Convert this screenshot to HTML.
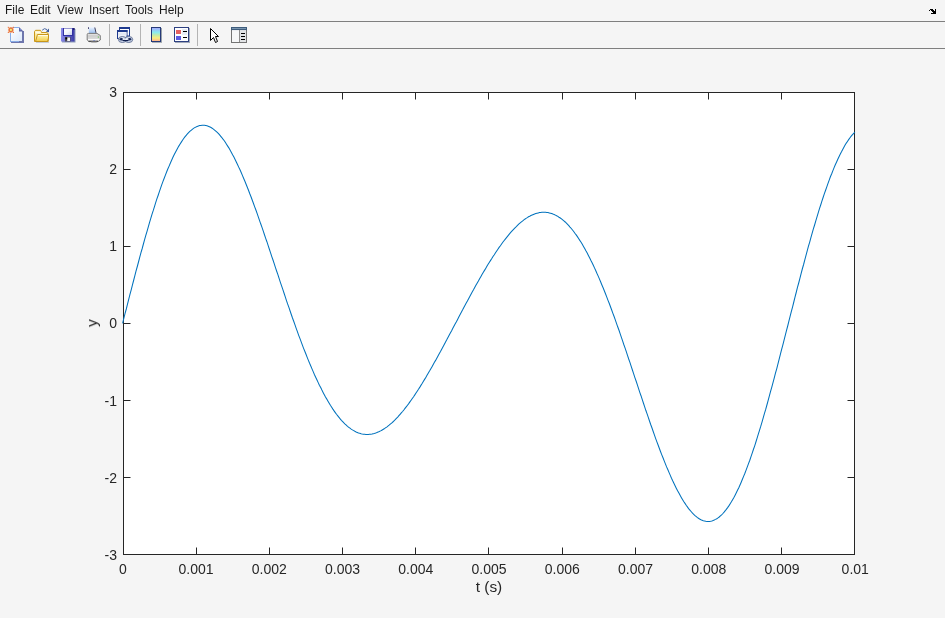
<!DOCTYPE html>
<html><head><meta charset="utf-8"><style>
html,body{margin:0;padding:0;}
body{width:945px;height:618px;background:#f5f5f5;position:relative;overflow:hidden;font-family:"Liberation Sans",sans-serif;}
.menu{position:absolute;top:0;left:0;width:945px;height:21px;font-size:12px;color:#1a1a1a;}
.menu span{position:absolute;top:3px;will-change:transform;}
.hl{position:absolute;left:0;width:945px;height:1px;background:#7f7f7f;}
.sep{position:absolute;top:24px;width:1px;height:22px;background:#b4b4b4;}
svg{position:absolute;left:0;top:0;}
.g{will-change:transform;}
</style></head><body>
<div class="menu"><span style="left:5px">File</span><span style="left:30px">Edit</span><span style="left:57px">View</span><span style="left:89px">Insert</span><span style="left:125px">Tools</span><span style="left:159px">Help</span></div>
<div class="hl" style="top:21px"></div>
<div class="hl" style="top:48px"></div>
<div class="sep" style="left:109px"></div>
<div class="sep" style="left:140px"></div>
<div class="sep" style="left:197px"></div>
<svg width="945" height="618" viewBox="0 0 945 618">
<defs>
<linearGradient id="gpage" x1="0" y1="0" x2="1" y2="1"><stop offset="0" stop-color="#ffffff"/><stop offset="1" stop-color="#dce9fb"/></linearGradient>
<linearGradient id="gfold" x1="0" y1="0" x2="0" y2="1"><stop offset="0" stop-color="#fff8b8"/><stop offset="1" stop-color="#f2cc48"/></linearGradient>
<linearGradient id="gcbar" x1="0" y1="0" x2="0" y2="1"><stop offset="0" stop-color="#a8a4ff"/><stop offset="0.35" stop-color="#88ecf0"/><stop offset="0.55" stop-color="#c4eaa8"/><stop offset="0.75" stop-color="#f8f080"/><stop offset="1" stop-color="#ffa890"/></linearGradient>
<linearGradient id="gsave" x1="0" y1="0" x2="1" y2="0"><stop offset="0" stop-color="#8a8ae8"/><stop offset="1" stop-color="#3c3ca8"/></linearGradient>
<linearGradient id="gpaper" x1="0" y1="0" x2="0" y2="1"><stop offset="0" stop-color="#eaf2ff"/><stop offset="1" stop-color="#9cc0f0"/></linearGradient>
<linearGradient id="glabel" x1="0" y1="0" x2="1" y2="1"><stop offset="0" stop-color="#ffffff"/><stop offset="0.5" stop-color="#f4f6fc"/><stop offset="1" stop-color="#c8d0ea"/></linearGradient>
</defs>
<!-- new -->
<g transform="translate(6,25)">
<path d="M5 6 H18 V18 H5 Z" fill="#6e76ac"/>
<path d="M4 2 H13 V17 H4 Z" fill="#88ace6"/>
<path d="M5 3 H13 V6 H16 V16 H5 Z" fill="url(#gpage)"/>
<path d="M13 2 L17.5 6.5 H13 Z" fill="#5e66a8"/>
<rect x="14" y="4" width="1" height="1.2" fill="#7890d8"/>
<circle cx="4.9" cy="4.9" r="3" fill="#f4b894"/>
<circle cx="4.9" cy="4.9" r="2.3" fill="#e8703e"/>
<circle cx="4.9" cy="4.9" r="1.1" fill="#eef078"/>
<rect x="1.8" y="1.8" width="1.1" height="1.1" fill="#e8703a"/><rect x="6.9" y="1.8" width="1.1" height="1.1" fill="#e8703a"/>
<rect x="1.8" y="6.9" width="1.1" height="1.1" fill="#e8703a"/><rect x="6.9" y="6.9" width="1.1" height="1.1" fill="#e8703a"/>
</g>
<!-- open -->
<g transform="translate(32,25)">
<rect x="4" y="16.8" width="13" height="1.2" fill="#c4ccd8"/>
<path d="M2.5 16.5 V6.5 L3.5 5.3 H8.5 L9.5 7.5 H14.8 L16.2 8.5 V16.5 Z" fill="#fbe89a" stroke="#c8961a" stroke-width="1"/>
<rect x="3.3" y="6.3" width="5.4" height="2.2" fill="#fffbe4"/>
<rect x="9.5" y="8.2" width="5" height="0.8" fill="#fff6d0"/>
<path d="M5.5 9.5 H16.5 V13 L15.5 16.5 H3.5 Z" fill="url(#gfold)" stroke="#c8961a" stroke-width="1" stroke-linejoin="round"/>
<path d="M6 10 H15.8 V10.9 H5.8 Z" fill="#fffbe6"/>
<path d="M10.2 5.2 Q12.5 2.4 15 4.6" fill="none" stroke="#4a66a0" stroke-width="1"/>
<path d="M13.8 6.6 L17 3.6 V7.2 Z" fill="#3e5c9c"/>
</g>
<!-- save -->
<g transform="translate(58,25)">
<rect x="4" y="4" width="13.5" height="13.5" fill="#8c9ab8"/>
<rect x="3" y="3" width="13.5" height="13.5" fill="url(#gsave)"/>
<rect x="15" y="3" width="1.5" height="2" fill="#22226a"/>
<rect x="5" y="3" width="10" height="8" fill="#3232a2"/>
<rect x="6" y="3.5" width="8" height="6.5" fill="url(#glabel)"/>
<rect x="7" y="12" width="5.5" height="4.5" fill="#4a4a52"/>
<rect x="9.2" y="12.5" width="2.8" height="3.6" fill="#f4f4f4"/>
<rect x="7.4" y="12.5" width="1.8" height="1.8" fill="#000"/>
</g>
<!-- print -->
<g transform="translate(84,25)">
<path d="M4.5 2.3 H10.8 L12.2 8.2 H5 Z" fill="url(#gpaper)"/>
<path d="M4.5 2.2 V4" stroke="#50507a" stroke-width="1"/>
<path d="M10.8 2.5 L12 7.8" stroke="#3c3c5a" stroke-width="1"/>
<path d="M3.2 9.5 Q3.2 8.4 4.5 8.4 H13 L16.3 10.5 V15 L14 16.6 H5 L3.2 15 Z" fill="#ececec" stroke="#5c5c5c" stroke-width="0.8"/>
<path d="M4 10.2 H15.5 M4 11.8 H15.5 M4 13.2 H15.5" stroke="#a8a8a8" stroke-width="0.6"/>
<path d="M4 13.8 H15 V15.2 H4 Z" fill="#fbfbfb"/>
<path d="M4.5 16.2 H14" stroke="#3a3a3a" stroke-width="1"/>
<rect x="7.2" y="16.6" width="5.5" height="1" fill="#9a9a9a"/>
<rect x="13.8" y="11.5" width="1" height="1.2" fill="#58c048"/>
<rect x="9.4" y="15" width="1.4" height="0.9" fill="#7080c8"/>
</g>
<!-- link -->
<g transform="translate(114,25)">
<rect x="5.5" y="2.5" width="10" height="8.5" fill="#ffffff" stroke="#1e3a8e" stroke-width="1"/>
<rect x="5" y="2" width="11" height="2" fill="#1e3a8e"/>
<rect x="3.5" y="5.5" width="9.5" height="8" fill="#f6f8fc" stroke="#1e3a8e" stroke-width="1"/>
<rect x="3" y="5" width="10.5" height="2" fill="#1e3a8e"/>
<rect x="4" y="7.5" width="8.5" height="3" fill="#e2e8f4"/>
<ellipse cx="8.4" cy="14.5" rx="4" ry="3" fill="#d4def0" stroke="#56648a" stroke-width="0.9"/>
<ellipse cx="14.7" cy="14.5" rx="4" ry="3" fill="#d4def0" stroke="#56648a" stroke-width="0.9"/>
<ellipse cx="7.4" cy="14.3" rx="1.8" ry="1.3" fill="#1a2a5a"/>
<ellipse cx="15.5" cy="14.3" rx="1.8" ry="1.3" fill="#1a2a5a"/>
<rect x="8.5" y="13.6" width="6" height="1.1" fill="#f8faff"/>
<rect x="8.5" y="15" width="6" height="1.1" fill="#0e1e4e"/>
</g>
<!-- colorbar -->
<g transform="translate(146,25)">
<rect x="6" y="3" width="10" height="14.8" fill="#98a0a8"/>
<rect x="5.5" y="2.5" width="9" height="14" fill="url(#gcbar)" stroke="#263a78" stroke-width="1"/>
</g>
<!-- legend -->
<g transform="translate(172,25)">
<rect x="3" y="3" width="15" height="15" fill="#a0a8b8"/>
<rect x="2.5" y="2.5" width="14" height="14" fill="#fdfdff" stroke="#2c3f80" stroke-width="1"/>
<rect x="10" y="4" width="5" height="6" fill="#e6ecf6"/>
<rect x="4" y="5" width="5" height="4" fill="#e46060"/>
<rect x="4" y="11" width="5" height="4" fill="#5a5ae2"/>
<path d="M11 6.5 H15 M11 12.5 H15" stroke="#000" stroke-width="1"/>
</g>
<!-- arrow -->
<g transform="translate(204,25)">
<path d="M6.5 3.5 V15.5 L9.5 12.5 L11.5 17.5 L13.5 16.5 L11.5 11.5 H14.5 Z" fill="#fff" stroke="#000" stroke-width="1" stroke-linejoin="round"/>
</g>
<!-- property -->
<g transform="translate(229,25)">
<rect x="2.5" y="2.5" width="15" height="15" fill="#e6e8ea" stroke="#747474" stroke-width="1"/>
<rect x="2" y="2" width="16" height="3.2" fill="#3e5c7c"/>
<rect x="3" y="3.2" width="14" height="0.6" fill="#a4bcd4"/>
<rect x="3" y="5.2" width="7" height="11.8" fill="#f6f7f8"/>
<rect x="11" y="5.2" width="6" height="11.8" fill="#e2e4e6"/>
<path d="M10.5 5 V17" stroke="#8c8c8c" stroke-width="1"/>
<path d="M12 8.5 H16 M12 11.5 H16 M12 14.5 H16" stroke="#000" stroke-width="1"/>
</g>
<!-- dock -->
<path d="M930 9h3v1h-3z M935 9h1v5h-1z M929 10h1v1h-1z M931 10h3v1h-3z M932 11h3v1h-3z M933 12h2v1h-2z M931 13h4v1h-4z" fill="#000"/>

<rect x="123.5" y="92.5" width="731" height="462" fill="#fff" stroke="#262626" stroke-width="1"/>
<path d="M123.5 93 V99.5 M123.5 554 V547.5 M196.5 93 V99.5 M196.5 554 V547.5 M269.5 93 V99.5 M269.5 554 V547.5 M342.5 93 V99.5 M342.5 554 V547.5 M415.5 93 V99.5 M415.5 554 V547.5 M488.5 93 V99.5 M488.5 554 V547.5 M562.5 93 V99.5 M562.5 554 V547.5 M635.5 93 V99.5 M635.5 554 V547.5 M708.5 93 V99.5 M708.5 554 V547.5 M781.5 93 V99.5 M781.5 554 V547.5 M854.5 93 V99.5 M854.5 554 V547.5 M124 92.5 H130.5 M854 92.5 H847.5 M124 169.5 H130.5 M854 169.5 H847.5 M124 246.5 H130.5 M854 246.5 H847.5 M124 323.5 H130.5 M854 323.5 H847.5 M124 400.5 H130.5 M854 400.5 H847.5 M124 477.5 H130.5 M854 477.5 H847.5 M124 554.5 H130.5 M854 554.5 H847.5" stroke="#262626" stroke-width="1" fill="none"/>
<path d="M122.6 323.4 L123.8 318.5 L125.0 313.7 L126.3 309.0 L127.5 304.2 L128.7 299.4 L129.9 294.6 L131.2 289.9 L132.4 285.2 L133.6 280.5 L134.8 275.8 L136.0 271.2 L137.3 266.5 L138.5 262.0 L139.7 257.4 L140.9 252.9 L142.2 248.5 L143.4 244.0 L144.6 239.7 L145.8 235.4 L147.1 231.1 L148.3 226.9 L149.5 222.7 L150.7 218.7 L151.9 214.6 L153.2 210.7 L154.4 206.8 L155.6 202.9 L156.8 199.2 L158.1 195.5 L159.3 191.9 L160.5 188.4 L161.7 184.9 L162.9 181.6 L164.2 178.3 L165.4 175.1 L166.6 172.0 L167.8 169.0 L169.1 166.1 L170.3 163.2 L171.5 160.5 L172.7 157.8 L173.9 155.3 L175.2 152.8 L176.4 150.5 L177.6 148.2 L178.8 146.1 L180.1 144.0 L181.3 142.1 L182.5 140.2 L183.7 138.5 L184.9 136.9 L186.2 135.3 L187.4 133.9 L188.6 132.6 L189.8 131.4 L191.1 130.3 L192.3 129.3 L193.5 128.4 L194.7 127.6 L196.0 127.0 L197.2 126.4 L198.4 126.0 L199.6 125.6 L200.8 125.4 L202.1 125.3 L203.3 125.2 L204.5 125.3 L205.7 125.5 L207.0 125.8 L208.2 126.2 L209.4 126.7 L210.6 127.3 L211.8 128.0 L213.1 128.9 L214.3 129.8 L215.5 130.8 L216.7 131.9 L218.0 133.1 L219.2 134.4 L220.4 135.8 L221.6 137.3 L222.8 138.9 L224.1 140.5 L225.3 142.3 L226.5 144.2 L227.7 146.1 L229.0 148.1 L230.2 150.2 L231.4 152.4 L232.6 154.7 L233.9 157.0 L235.1 159.4 L236.3 161.9 L237.5 164.5 L238.7 167.1 L240.0 169.8 L241.2 172.5 L242.4 175.4 L243.6 178.2 L244.9 181.2 L246.1 184.2 L247.3 187.2 L248.5 190.3 L249.7 193.5 L251.0 196.7 L252.2 200.0 L253.4 203.2 L254.6 206.6 L255.9 210.0 L257.1 213.4 L258.3 216.8 L259.5 220.3 L260.7 223.8 L262.0 227.3 L263.2 230.9 L264.4 234.5 L265.6 238.1 L266.9 241.7 L268.1 245.3 L269.3 249.0 L270.5 252.6 L271.7 256.3 L273.0 260.0 L274.2 263.7 L275.4 267.4 L276.6 271.0 L277.9 274.7 L279.1 278.4 L280.3 282.1 L281.5 285.7 L282.8 289.4 L284.0 293.0 L285.2 296.7 L286.4 300.3 L287.6 303.9 L288.9 307.4 L290.1 311.0 L291.3 314.5 L292.5 318.0 L293.8 321.5 L295.0 324.9 L296.2 328.3 L297.4 331.7 L298.6 335.1 L299.9 338.4 L301.1 341.6 L302.3 344.9 L303.5 348.1 L304.8 351.2 L306.0 354.3 L307.2 357.4 L308.4 360.4 L309.6 363.3 L310.9 366.2 L312.1 369.1 L313.3 371.9 L314.5 374.7 L315.8 377.4 L317.0 380.0 L318.2 382.6 L319.4 385.2 L320.7 387.6 L321.9 390.1 L323.1 392.4 L324.3 394.7 L325.5 397.0 L326.8 399.1 L328.0 401.2 L329.2 403.3 L330.4 405.3 L331.7 407.2 L332.9 409.1 L334.1 410.9 L335.3 412.6 L336.5 414.3 L337.8 415.9 L339.0 417.4 L340.2 418.9 L341.4 420.3 L342.7 421.6 L343.9 422.9 L345.1 424.1 L346.3 425.2 L347.5 426.3 L348.8 427.3 L350.0 428.2 L351.2 429.1 L352.4 429.9 L353.7 430.6 L354.9 431.3 L356.1 431.9 L357.3 432.4 L358.5 432.9 L359.8 433.3 L361.0 433.7 L362.2 434.0 L363.4 434.2 L364.7 434.3 L365.9 434.4 L367.1 434.5 L368.3 434.4 L369.6 434.3 L370.8 434.2 L372.0 434.0 L373.2 433.7 L374.4 433.4 L375.7 433.0 L376.9 432.6 L378.1 432.1 L379.3 431.5 L380.6 430.9 L381.8 430.2 L383.0 429.5 L384.2 428.8 L385.4 427.9 L386.7 427.1 L387.9 426.1 L389.1 425.2 L390.3 424.1 L391.6 423.1 L392.8 422.0 L394.0 420.8 L395.2 419.6 L396.4 418.3 L397.7 417.1 L398.9 415.7 L400.1 414.3 L401.3 412.9 L402.6 411.5 L403.8 410.0 L405.0 408.4 L406.2 406.9 L407.5 405.2 L408.7 403.6 L409.9 401.9 L411.1 400.2 L412.3 398.5 L413.6 396.7 L414.8 394.9 L416.0 393.0 L417.2 391.2 L418.5 389.3 L419.7 387.4 L420.9 385.4 L422.1 383.5 L423.3 381.5 L424.6 379.4 L425.8 377.4 L427.0 375.3 L428.2 373.2 L429.5 371.1 L430.7 369.0 L431.9 366.9 L433.1 364.7 L434.3 362.5 L435.6 360.4 L436.8 358.2 L438.0 355.9 L439.2 353.7 L440.5 351.5 L441.7 349.2 L442.9 347.0 L444.1 344.7 L445.3 342.4 L446.6 340.1 L447.8 337.8 L449.0 335.5 L450.2 333.2 L451.5 330.9 L452.7 328.6 L453.9 326.3 L455.1 324.0 L456.4 321.7 L457.6 319.4 L458.8 317.0 L460.0 314.7 L461.2 312.4 L462.5 310.1 L463.7 307.8 L464.9 305.5 L466.1 303.3 L467.4 301.0 L468.6 298.7 L469.8 296.5 L471.0 294.2 L472.2 292.0 L473.5 289.8 L474.7 287.5 L475.9 285.3 L477.1 283.2 L478.4 281.0 L479.6 278.8 L480.8 276.7 L482.0 274.6 L483.2 272.5 L484.5 270.4 L485.7 268.4 L486.9 266.3 L488.1 264.3 L489.4 262.3 L490.6 260.4 L491.8 258.5 L493.0 256.5 L494.3 254.7 L495.5 252.8 L496.7 251.0 L497.9 249.2 L499.1 247.4 L500.4 245.7 L501.6 244.0 L502.8 242.3 L504.0 240.7 L505.3 239.1 L506.5 237.6 L507.7 236.1 L508.9 234.6 L510.1 233.1 L511.4 231.7 L512.6 230.4 L513.8 229.1 L515.0 227.8 L516.3 226.6 L517.5 225.4 L518.7 224.2 L519.9 223.1 L521.1 222.1 L522.4 221.1 L523.6 220.1 L524.8 219.2 L526.0 218.4 L527.3 217.6 L528.5 216.8 L529.7 216.2 L530.9 215.5 L532.2 214.9 L533.4 214.4 L534.6 213.9 L535.8 213.5 L537.0 213.2 L538.3 212.9 L539.5 212.6 L540.7 212.4 L541.9 212.3 L543.2 212.2 L544.4 212.2 L545.6 212.3 L546.8 212.4 L548.0 212.6 L549.3 212.9 L550.5 213.2 L551.7 213.5 L552.9 214.0 L554.2 214.5 L555.4 215.1 L556.6 215.7 L557.8 216.4 L559.0 217.2 L560.3 218.0 L561.5 218.9 L562.7 219.9 L563.9 220.9 L565.2 222.0 L566.4 223.2 L567.6 224.4 L568.8 225.7 L570.0 227.1 L571.3 228.5 L572.5 230.0 L573.7 231.5 L574.9 233.2 L576.2 234.9 L577.4 236.6 L578.6 238.5 L579.8 240.4 L581.1 242.3 L582.3 244.3 L583.5 246.4 L584.7 248.6 L585.9 250.8 L587.2 253.0 L588.4 255.4 L589.6 257.7 L590.8 260.2 L592.1 262.7 L593.3 265.3 L594.5 267.9 L595.7 270.5 L596.9 273.3 L598.2 276.1 L599.4 278.9 L600.6 281.8 L601.8 284.7 L603.1 287.7 L604.3 290.7 L605.5 293.8 L606.7 296.9 L607.9 300.1 L609.2 303.3 L610.4 306.5 L611.6 309.8 L612.8 313.1 L614.1 316.5 L615.3 319.9 L616.5 323.3 L617.7 326.8 L619.0 330.3 L620.2 333.8 L621.4 337.3 L622.6 340.9 L623.8 344.5 L625.1 348.1 L626.3 351.7 L627.5 355.3 L628.7 359.0 L630.0 362.6 L631.2 366.3 L632.4 370.0 L633.6 373.6 L634.8 377.3 L636.1 381.0 L637.3 384.7 L638.5 388.4 L639.7 392.1 L641.0 395.7 L642.2 399.4 L643.4 403.0 L644.6 406.7 L645.8 410.3 L647.1 413.9 L648.3 417.4 L649.5 421.0 L650.7 424.5 L652.0 428.0 L653.2 431.5 L654.4 434.9 L655.6 438.3 L656.8 441.6 L658.1 445.0 L659.3 448.2 L660.5 451.5 L661.7 454.6 L663.0 457.8 L664.2 460.9 L665.4 463.9 L666.6 466.9 L667.9 469.8 L669.1 472.6 L670.3 475.4 L671.5 478.2 L672.7 480.8 L674.0 483.4 L675.2 485.9 L676.4 488.4 L677.6 490.8 L678.9 493.1 L680.1 495.3 L681.3 497.4 L682.5 499.5 L683.7 501.5 L685.0 503.4 L686.2 505.2 L687.4 506.9 L688.6 508.6 L689.9 510.1 L691.1 511.5 L692.3 512.9 L693.5 514.2 L694.7 515.3 L696.0 516.4 L697.2 517.4 L698.4 518.2 L699.6 519.0 L700.9 519.7 L702.1 520.2 L703.3 520.7 L704.5 521.0 L705.8 521.3 L707.0 521.4 L708.2 521.5 L709.4 521.4 L710.6 521.2 L711.9 520.9 L713.1 520.5 L714.3 520.0 L715.5 519.4 L716.8 518.7 L718.0 517.9 L719.2 517.0 L720.4 515.9 L721.6 514.8 L722.9 513.5 L724.1 512.2 L725.3 510.7 L726.5 509.1 L727.8 507.4 L729.0 505.6 L730.2 503.7 L731.4 501.8 L732.6 499.7 L733.9 497.5 L735.1 495.2 L736.3 492.8 L737.5 490.3 L738.8 487.7 L740.0 485.0 L741.2 482.2 L742.4 479.3 L743.6 476.4 L744.9 473.3 L746.1 470.1 L747.3 466.9 L748.5 463.6 L749.8 460.2 L751.0 456.7 L752.2 453.2 L753.4 449.5 L754.7 445.8 L755.9 442.0 L757.1 438.2 L758.3 434.2 L759.5 430.3 L760.8 426.2 L762.0 422.1 L763.2 417.9 L764.4 413.7 L765.7 409.4 L766.9 405.0 L768.1 400.7 L769.3 396.2 L770.5 391.7 L771.8 387.2 L773.0 382.7 L774.2 378.1 L775.4 373.4 L776.7 368.8 L777.9 364.1 L779.1 359.4 L780.3 354.7 L781.5 349.9 L782.8 345.1 L784.0 340.4 L785.2 335.6 L786.4 330.8 L787.7 326.0 L788.9 321.2 L790.1 316.4 L791.3 311.6 L792.6 306.8 L793.8 302.0 L795.0 297.2 L796.2 292.5 L797.4 287.7 L798.7 283.0 L799.9 278.3 L801.1 273.7 L802.3 269.0 L803.6 264.5 L804.8 259.9 L806.0 255.4 L807.2 250.9 L808.4 246.4 L809.7 242.1 L810.9 237.7 L812.1 233.4 L813.3 229.2 L814.6 225.0 L815.8 220.9 L817.0 216.8 L818.2 212.8 L819.4 208.9 L820.7 205.0 L821.9 201.2 L823.1 197.5 L824.3 193.9 L825.6 190.3 L826.8 186.8 L828.0 183.4 L829.2 180.1 L830.4 176.8 L831.7 173.7 L832.9 170.6 L834.1 167.6 L835.3 164.8 L836.6 162.0 L837.8 159.3 L839.0 156.7 L840.2 154.2 L841.5 151.8 L842.7 149.4 L843.9 147.2 L845.1 145.1 L846.3 143.1 L847.6 141.2 L848.8 139.4 L850.0 137.7 L851.2 136.2 L852.5 134.7 L853.7 133.3 L854.9 132.0" stroke="#0072bd" stroke-width="1.05" fill="none"/>
<g class="g" font-family="Liberation Sans" font-size="14" fill="#262626">
<text x="122.85" y="574" text-anchor="middle">0</text><text x="196.09" y="574" text-anchor="middle">0.001</text><text x="269.32" y="574" text-anchor="middle">0.002</text><text x="342.56" y="574" text-anchor="middle">0.003</text><text x="415.80" y="574" text-anchor="middle">0.004</text><text x="489.04" y="574" text-anchor="middle">0.005</text><text x="562.27" y="574" text-anchor="middle">0.006</text><text x="635.51" y="574" text-anchor="middle">0.007</text><text x="708.75" y="574" text-anchor="middle">0.008</text><text x="781.99" y="574" text-anchor="middle">0.009</text><text x="855.23" y="574" text-anchor="middle">0.01</text>
<text x="117" y="97" text-anchor="end">3</text><text x="117" y="174" text-anchor="end">2</text><text x="117" y="251" text-anchor="end">1</text><text x="117" y="328" text-anchor="end">0</text><text x="117" y="406" text-anchor="end">-1</text><text x="117" y="483" text-anchor="end">-2</text><text x="117" y="560" text-anchor="end">-3</text>
<text x="489" y="592" font-size="15.4" text-anchor="middle">t (s)</text>
<text transform="translate(97,323.2) rotate(-90)" font-size="15.4" text-anchor="middle">y</text>
</g>
</svg>
</body></html>
